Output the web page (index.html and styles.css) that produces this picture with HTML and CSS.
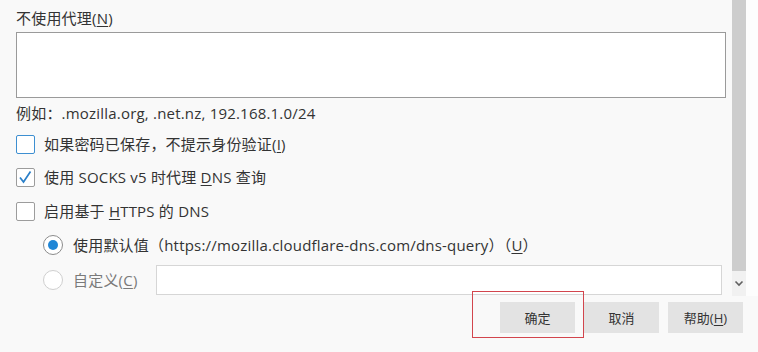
FILE: index.html
```html
<!DOCTYPE html>
<html lang="zh-CN">
<head>
    <meta charset="UTF-8">
    <title>连接设置</title>
    <link rel="stylesheet" href="styles.css">
</head>
<body>

<div class="dialog">
    <div class="scroll-area">
        <div class="content">
            <label class="field-label" for="noProxy">不使用代理(<u>N</u>)</label>
            <textarea id="noProxy" class="no-proxy"></textarea>
            <p class="hint">例如：.mozilla.org, .net.nz, 192.168.1.0/24</p>

            <div class="check-row row-1">
                <span class="checkbox focused"></span>
                <span>如果密码已保存，不提示身份验证(<u>I</u>)</span>
            </div>

            <div class="check-row row-2">
                <span class="checkbox">
                    <svg width="19" height="19" viewBox="0 0 19 19"><polyline points="4,9.5 7.5,14 14.5,3.5" fill="none" stroke="#2b7fc8" stroke-width="1.7"/></svg>
                </span>
                <span>使用 SOCKS v5 时代理 <u>D</u>NS 查询</span>
            </div>

            <div class="check-row row-3">
                <span class="checkbox"></span>
                <span>启用基于 <u>H</u>TTPS 的 DNS</span>
            </div>

            <div class="radio-row row-4">
                <span class="radio checked"></span>
                <span>使用默认值（https://mozilla.cloudflare-dns.com/dns-query）（<u>U</u>）</span>
            </div>

            <div class="radio-row row-5 disabled">
                <span class="radio"></span>
                <span class="custom-label">自定义(<u>C</u>)</span>
                <input type="text" class="custom-url" disabled>
            </div>
        </div>

        <div class="scrollbar">
            <div class="thumb"></div>
            <div class="arrow">
                <svg width="10" height="7" viewBox="0 0 10 7"><polyline points="1.5,1.5 5,5 8.5,1.5" fill="none" stroke="#606060" stroke-width="1.6"/></svg>
            </div>
        </div>
        <div class="edge"></div>
    </div>

    <div class="footer">
        <button class="btn">确定</button>
        <button class="btn">取消</button>
        <button class="btn">帮助(<u>H</u>)</button>
    </div>

    <div class="highlight"></div>
</div>

</body>
</html>
```

FILE: styles.css
```css
* {
    box-sizing: border-box;
    margin: 0;
    padding: 0;
}

body {
    font-family: 'Open Sans', 'Noto Sans CJK SC', sans-serif;
    font-size: 15px;
    line-height: 20px;
    letter-spacing: 0.2px;
    color: #333333;
    background-color: #f9f9f9;
    width: 758px;
    height: 352px;
    overflow: hidden;
}

.dialog {
    position: relative;
    height: 352px;
}

.scroll-area {
    display: flex;
    height: 296px;
}

.content {
    flex: 1;
    padding: 8px 6px 0 16px;
}

.field-label {
    display: block;
}

u {
    text-underline-offset: 2px;
}

.no-proxy {
    display: block;
    width: 710px;
    height: 66px;
    margin-top: 4px;
    border: 1px solid #9a9a9a;
    background: #ffffff;
    resize: none;
}

.hint {
    margin-top: 5px;
}

.check-row,
.radio-row {
    display: flex;
    align-items: center;
    height: 20px;
}

.row-1 { margin-top: 11px; }
.row-2 { margin-top: 13px; }
.row-3 { margin-top: 14px; }
.row-4 { margin-top: 14px; padding-left: 27px; }
.row-5 { margin-top: 10px; padding-left: 27px; height: 30px; }

.checkbox {
    width: 19px;
    height: 19px;
    margin-right: 9px;
    border: 1px solid #9c9c9c;
    border-radius: 2px;
    background: #ffffff;
    display: flex;
}

.checkbox svg {
    margin: -1px;
}

.checkbox.focused {
    border-color: #3d8fd1;
}

.radio {
    width: 20px;
    height: 20px;
    margin-right: 10px;
    border: 1px solid #cfcfcf;
    border-radius: 50%;
    background: #ffffff;
    display: flex;
    align-items: center;
    justify-content: center;
}

.radio.checked {
    border-color: #8c8c8c;
}

.radio.checked::after {
    content: '';
    width: 10px;
    height: 10px;
    border-radius: 50%;
    background: #1f86d6;
}

.custom-label {
    width: 83px;
}

.disabled .custom-label {
    color: #7a7a7a;
}

.custom-url {
    flex: 1;
    height: 30px;
    margin-right: 4px;
    border: 1px solid #d6d6d6;
    background: #ffffff;
}

.scrollbar {
    width: 15px;
    display: flex;
    flex-direction: column;
}

.thumb {
    flex: 1;
    background: #cdcdcd;
}

.arrow {
    height: 25px;
    background: #f1f1f1;
    display: flex;
    align-items: center;
    justify-content: center;
}

.edge {
    width: 12px;
    background: #fdfdfd;
}

.footer {
    display: flex;
    justify-content: flex-end;
    gap: 9px;
    padding: 6px 15px 0 0;
}

.btn {
    width: 75px;
    height: 31px;
    border: none;
    background: #e3e3e3;
    color: #333333;
    font-family: 'Open Sans', 'Noto Sans CJK SC', sans-serif;
    font-size: 13px;
}

.highlight {
    position: absolute;
    left: 472px;
    top: 291px;
    width: 112px;
    height: 47px;
    border: 1px solid #d2454d;
}
```
